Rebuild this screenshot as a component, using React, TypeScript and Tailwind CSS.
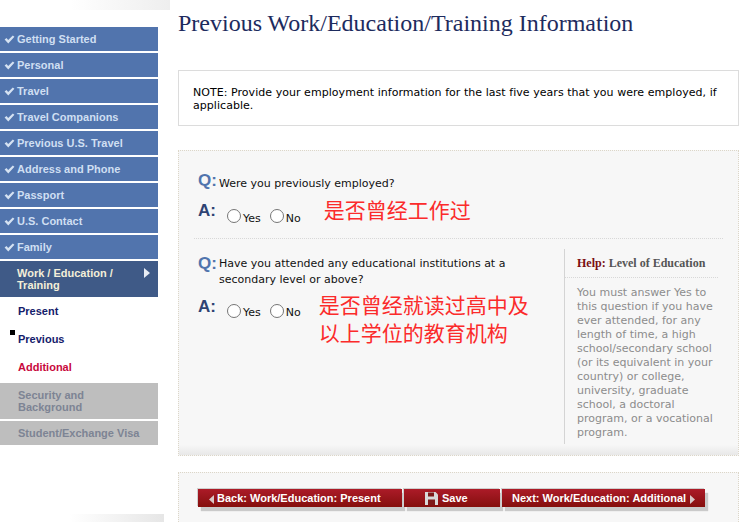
import React from "react";

const done = ["Getting Started", "Personal", "Travel", "Travel Companions", "Previous U.S. Travel", "Address and Phone", "Passport", "U.S. Contact", "Family"];
const arial = "font-['Liberation_Sans',Arial,sans-serif]";
const body = "font-['DejaVu_Sans',Verdana,sans-serif]";
const cjk = "font-['Noto_Sans_CJK_SC','Noto_Sans_CJK_SC',sans-serif]";

function Check() {
  return (
    <svg width="11" height="9" viewBox="0 0 11 9" className="shrink-0">
      <path d="M0.6 4.6 L2.5 3 L4.2 4.9 L8.8 0.4 L10.4 1.8 L4.3 8.6 Z" fill="#d5e2f2" />
    </svg>
  );
}

function Radio({ label, drop }: { label: string; drop?: boolean }) {
  return (
    <span className="flex items-start">
      <span className="w-[14px] h-[14px] rounded-full border border-[#767676] bg-white mt-px" />
      <span className={`ml-[2px] ${drop ? "mt-[4px]" : "mt-[3px]"} text-[11px] leading-[13px] text-[#111]`}>{label}</span>
    </span>
  );
}

function QMark({ c, children }: { c: string; children: string }) {
  return <span className={`${arial} font-bold text-[17px] leading-[18px] w-[21px] shrink-0 ${c}`}>{children}</span>;
}

function Btn({ children, className = "" }: { children: React.ReactNode; className?: string }) {
  return (
    <div className={`h-[18px] flex items-center bg-gradient-to-b from-[#ac1b28] to-[#850f0c] text-white font-bold text-[11px] ${arial} shadow-[3px_4px_1px_#cacaca,-1px_-1px_0_#cfcfcf] ${className}`}>
      {children}
    </div>
  );
}

export default function App() {
  return (
    <div className="relative w-[755px] h-[522px] overflow-hidden bg-white flex">
      <aside className="w-[178px] shrink-0 flex flex-col">
        <div className="ml-[70px] w-[100px] h-[10px] bg-gradient-to-r from-white to-[#eeeeee]" />
        <nav className={`mt-[17px] w-[158px] flex flex-col gap-[2px] font-bold text-[11px] leading-[12px] ${arial}`}>
          {done.map((t) => (
            <div key={t} className="h-6 bg-[#5174ad] flex items-center pl-[4px] gap-[2px] text-[#cfdff2]">
              <Check />
              <span>{t}</span>
            </div>
          ))}
          <div className="h-[36px] bg-[#3f5a87] text-[#f3efd9] pl-[17px] pt-[6px] flex">
            <span className="w-[127px]">Work / Education / Training</span>
            <svg width="6" height="10" viewBox="0 0 6 10" className="mt-px"><path d="M0 0 L6 5 L0 10 Z" fill="#e8edf5" /></svg>
          </div>
          <div className="-mt-[2px] pl-[18px] flex flex-col text-[#14206b]">
            <div className="h-[28px] flex items-center">Present</div>
            <div className="relative h-[28px] flex items-center">
              Previous
              <span className="absolute left-[-8px] top-[5px] w-[5px] h-[5px] bg-black" />
            </div>
            <div className="h-[28px] flex items-center text-[#c8083c]">Additional</div>
          </div>
          <div className="h-[36px] bg-[#bebebe] text-[#7d8494] pl-[18px] pt-[6px]">Security and<br />Background</div>
          <div className="h-6 bg-[#bebebe] text-[#7d8494] pl-[18px] flex items-center">Student/Exchange Visa</div>
        </nav>
        <div className="ml-[70px] mt-auto w-[94px] h-[8px] bg-gradient-to-r from-white to-[#e6e6e6]" />
      </aside>

      <main className={`w-[561px] flex flex-col ${body}`}>
        <h1 className="mt-[7px] h-[32px] font-['Liberation_Serif',serif] text-[24px] leading-[32px] text-[#1d2b5e] whitespace-nowrap">
          Previous Work/Education/Training Information
        </h1>
        <div className="mt-[31px] h-[56px] border border-[#dcdcdc] pl-[14px] pr-[18px] pt-[15px] text-[11px] leading-[13px] tracking-[0.045px] text-black">
          NOTE: Provide your employment information for the last five years that you were employed, if applicable.
        </div>

        <section className="mt-[24px] h-[306px] border border-dotted border-[#dcd6c8] bg-[#f7f7f7] flex flex-col">
          <div className="h-[88px] mx-[15px] border-b border-dotted border-[#d8d8d8] pt-[21px] pl-[4px]">
            <div className="flex items-start">
              <QMark c="text-[#5174ad]">Q:</QMark>
              <span className="mt-[5px] text-[11px] leading-[13px] text-[#111]">Were you previously employed?</span>
            </div>
            <div className="mt-[12px] flex items-start">
              <QMark c="text-[#2f4373]">A:</QMark>
              <div className="flex items-start gap-[9px] ml-[8px] mt-[6px]">
                <Radio label="Yes" drop />
                <Radio label="No" drop />
              </div>
              <span className={`${cjk} ml-[23px] -mt-[8px] text-[21px] leading-[30px] text-[#fb2b2b] whitespace-nowrap`}>是否曾经工作过</span>
            </div>
          </div>

          <div className="flex flex-1 min-h-0 pl-[19px] pr-[20px]">
            <div className="w-[367px] pt-[16px]">
              <div className="flex items-start">
                <QMark c="text-[#5174ad]">Q:</QMark>
                <span className="mt-[1px] w-[310px] text-[11px] leading-[16px] text-[#111]">Have you attended any educational institutions at a secondary level or above?</span>
              </div>
              <div className="mt-[10px] flex items-start">
                <QMark c="text-[#2f4373]">A:</QMark>
                <div className="flex items-start gap-[9px] ml-[8px] mt-[5px]">
                  <Radio label="Yes" />
                  <Radio label="No" />
                </div>
                <span className={`${cjk} ml-[18px] -mt-[8px] w-[220px] text-[21px] leading-[28px] text-[#fb2b2b]`}>是否曾经就读过高中及以上学位的教育机构</span>
              </div>
            </div>
            <div className="w-[154px] mt-[10px] mb-[1px] border-l border-[#d4d4d4] pl-[12px]">
              <div className="h-[29px] border-b border-dotted border-[#d8d8d8] font-['Liberation_Serif',serif] font-bold text-[12px] leading-[29px] text-[#555] whitespace-nowrap -ml-[12px] pl-[12px]">
                <span className="text-[#7a0f12]">Help:</span> Level of Education
              </div>
              <p className="mt-[8px] text-[11px] leading-[14px] text-[#8c8c8c] w-[146px]">
                You must answer Yes to this question if you have ever attended, for any length of time, a high school/secondary school (or its equivalent in your country) or college, university, graduate school, a doctoral program, or a vocational program.
              </p>
            </div>
          </div>
          <div className="h-[10px] bg-gradient-to-b from-[#f7f7f7] to-[#e8e8e8]" />
        </section>

        <section className="mt-[16px] flex-1 border-t border-x border-dotted border-[#dcd6c8] bg-[#f7f7f7] pl-[19px] pt-[16px]">
          <div className="flex gap-[2px]">
            <Btn className="w-[204px] pl-[11px]">
              <svg width="5" height="9" viewBox="0 0 5 9" className="mr-[3px] mt-[2px]"><path d="M5 0 L0 4.5 L5 9 Z" fill="#d8c8c8" /></svg>
              Back: Work/Education: Present
            </Btn>
            <Btn className="w-[96px] pl-[21px]">
              <svg width="13" height="13" viewBox="0 0 13 13" className="mr-[4px]">
                <path d="M0 0 H10.5 L13 2.5 V13 H0 Z" fill="#d9d9d9" />
                <rect x="3" y="0.5" width="6" height="4" fill="#7d1a1a" />
                <rect x="3" y="7.5" width="7" height="5.5" fill="#7d1a1a" />
              </svg>
              Save
            </Btn>
            <Btn className="w-[203px] pl-[10px]">
              Next: Work/Education: Additional
              <svg width="5" height="9" viewBox="0 0 5 9" className="ml-[4px] mt-[2px]"><path d="M0 0 L5 4.5 L0 9 Z" fill="#d8c8c8" /></svg>
            </Btn>
          </div>
        </section>
      </main>
    </div>
  );
}
